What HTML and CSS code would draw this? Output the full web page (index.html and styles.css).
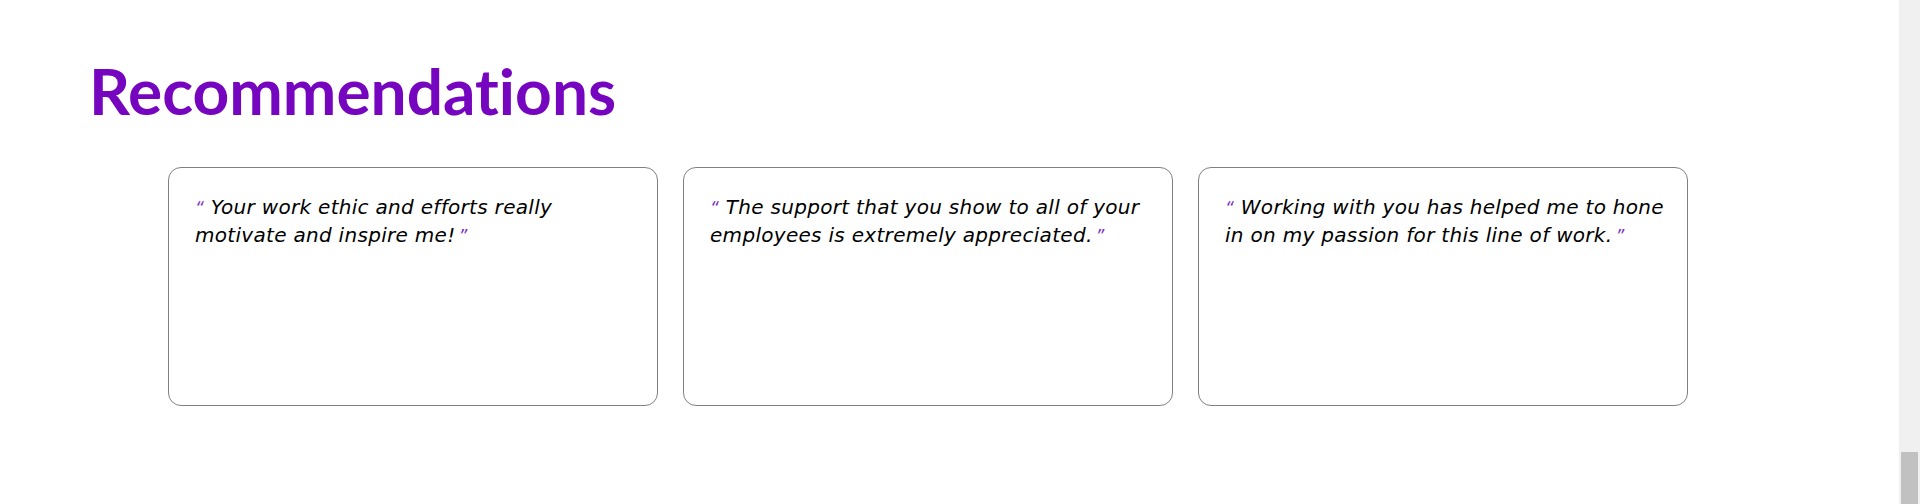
FILE: index.html
```html
<!DOCTYPE html>
<html lang="en">
<head>
<meta charset="utf-8">
<title>Recommendations</title>
<link rel="stylesheet" href="styles.css">
</head>
<body>
<main class="page">
  <section class="recommendations">
    <h1 class="title">Recommendations</h1>
    <div class="cards">
      <div class="card">
        <p class="quote"><span class="mark">&#8220;</span> Your work ethic and efforts really motivate and inspire me!<span class="mark mark-close">&#8221;</span></p>
      </div>
      <div class="card">
        <p class="quote"><span class="mark">&#8220;</span> The support that you show to all of your employees is extremely appreciated.<span class="mark mark-close">&#8221;</span></p>
      </div>
      <div class="card">
        <p class="quote"><span class="mark">&#8220;</span> Working with you has helped me to hone in on my passion for this line of work.<span class="mark mark-close">&#8221;</span></p>
      </div>
    </div>
  </section>
</main>
<div class="scrollbar" aria-hidden="true"><div class="scrollbar-thumb"></div></div>
</body>
</html>
```

FILE: styles.css
```css
html, body {
  margin: 0;
  padding: 0;
  background: #ffffff;
}

body {
  font-family: "DejaVu Sans", "Open Sans", sans-serif;
  color: #000;
}

.page {
  width: 1899px;
}

.recommendations {
  padding: 53px 0 0 0;
}

.title {
  margin: 0 0 39px 89px;
  font-family: "Lato", "Open Sans", sans-serif;
  font-weight: 700;
  font-size: 64px;
  line-height: 75px;
  font-variant-ligatures: none;
  color: #7605bf;
}

.cards {
  display: flex;
  gap: 25px;
  margin-left: 168px;
}

.card {
  box-sizing: border-box;
  width: 490px;
  height: 239px;
  padding: 26px 20px 26px 26px;
  border: 1px solid #808080;
  border-radius: 13px;
}

.quote {
  margin: 0;
  font-style: italic;
  font-size: 20px;
  line-height: 27px;
  letter-spacing: 0.3px;
  color: #000;
}

.mark {
  color: #7a2fc8;
  font-size: 17px;
}

.mark-close {
  margin-left: 3px;
}

.scrollbar {
  position: fixed;
  top: 0;
  right: 0;
  width: 21px;
  height: 100%;
  background: #f0f0f0;
}

.scrollbar-thumb {
  position: absolute;
  left: 2px;
  bottom: 0;
  width: 17px;
  height: 52px;
  background: #c1c1c1;
}
```
